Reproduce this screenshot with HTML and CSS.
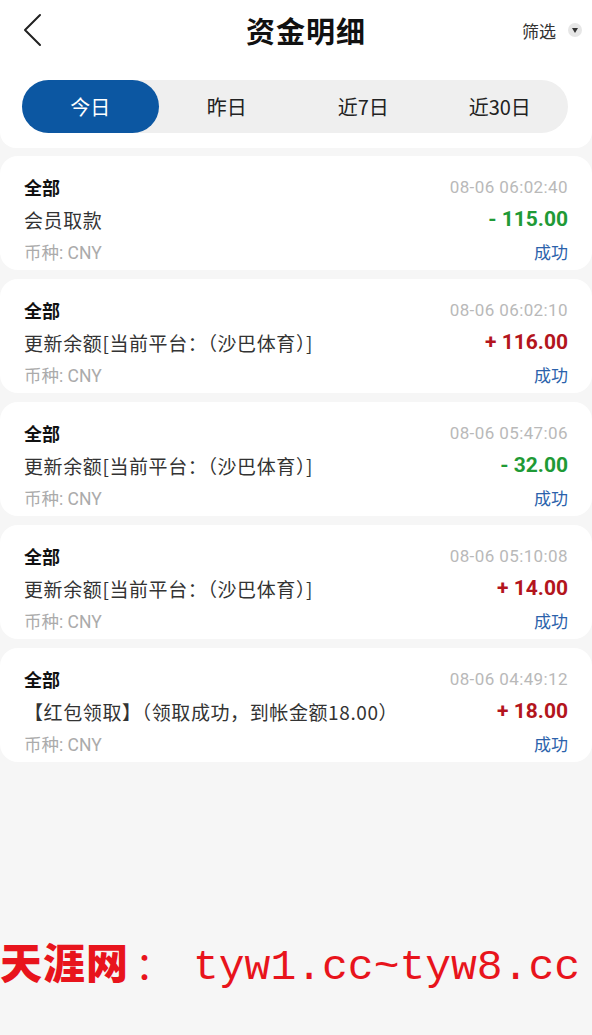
FILE: index.html
```html
<!DOCTYPE html>
<html>
<head>
 <meta charset="utf-8">
 <title>资金明细</title>
 <link rel="stylesheet" href="styles.css">
</head>
<body>
 <div class="entete">
  <div class="barre">
   <svg class="retour" width="24" height="36" viewBox="0 0 24 36">
    <path d="M18 3 L3 18 L18 33" fill="none" stroke="#222" stroke-width="2" stroke-linecap="round" stroke-linejoin="round"/>
   </svg>
   <h1 class="titre">资金明细</h1>
   <div class="filtre">筛选 <span class="rond"><span class="fleche"></span></span></div>
  </div>
  <div class="onglets">
   <div class="onglet actif">今日</div>
   <div class="onglet">昨日</div>
   <div class="onglet">近7日</div>
   <div class="onglet">近30日</div>
  </div>
 </div>

 <div class="liste">
  <div class="carte">
   <div class="ligne"><span class="type">全部</span><span class="date">08-06 06:02:40</span></div>
   <div class="ligne"><span class="desc">会员取款</span><span class="montant moins">- 115.00</span></div>
   <div class="ligne"><span class="devise">币种: CNY</span><span class="etat">成功</span></div>
  </div>
  <div class="carte">
   <div class="ligne"><span class="type">全部</span><span class="date">08-06 06:02:10</span></div>
   <div class="ligne"><span class="desc">更新余额[当前平台：（沙巴体育）]</span><span class="montant plus">+ 116.00</span></div>
   <div class="ligne"><span class="devise">币种: CNY</span><span class="etat">成功</span></div>
  </div>
  <div class="carte">
   <div class="ligne"><span class="type">全部</span><span class="date">08-06 05:47:06</span></div>
   <div class="ligne"><span class="desc">更新余额[当前平台：（沙巴体育）]</span><span class="montant moins">- 32.00</span></div>
   <div class="ligne"><span class="devise">币种: CNY</span><span class="etat">成功</span></div>
  </div>
  <div class="carte">
   <div class="ligne"><span class="type">全部</span><span class="date">08-06 05:10:08</span></div>
   <div class="ligne"><span class="desc">更新余额[当前平台：（沙巴体育）]</span><span class="montant plus">+ 14.00</span></div>
   <div class="ligne"><span class="devise">币种: CNY</span><span class="etat">成功</span></div>
  </div>
  <div class="carte">
   <div class="ligne"><span class="type">全部</span><span class="date">08-06 04:49:12</span></div>
   <div class="ligne"><span class="desc">【红包领取】（领取成功，到帐金额18.00）</span><span class="montant plus">+ 18.00</span></div>
   <div class="ligne"><span class="devise">币种: CNY</span><span class="etat">成功</span></div>
  </div>
 </div>

 <div class="marque"><span class="nom">天涯网</span><span class="deux">：</span><span class="url">tyw1.cc~tyw8.cc</span></div>
</body>
</html>
```

FILE: styles.css
```css
/* Style général */
body {
 margin: 0;
 background-color: #f6f6f6;
 font-family: Roboto, "Noto Sans CJK SC", sans-serif;
 color: #222;
 overflow: hidden;
}
/* En-tête */
.entete {
 background-color: #fff;
 border-radius: 0 0 16px 16px;
 padding-bottom: 15px;
}
.barre {
 height: 60px;
 display: grid;
 grid-template-columns: 1fr auto 1fr;
 align-items: center;
 padding: 0 10px 0 22px;
}
.retour {
 width: 24px;
 height: 36px;
}
.titre {
 margin: 0 0 0 8px;
 font-size: 29px;
 font-weight: bold;
 color: #111;
 letter-spacing: 1px;
 font-family: "Noto Sans CJK SC", sans-serif;
}
.filtre {
 justify-self: end;
 display: flex;
 align-items: center;
 gap: 12px;
 font-size: 17px;
 color: #333;
 font-family: "Noto Sans CJK SC", sans-serif;
}
.rond {
 width: 14px;
 height: 14px;
 border-radius: 50%;
 background-color: #e6e6e6;
 display: flex;
 align-items: center;
 justify-content: center;
}
.fleche {
 width: 0;
 height: 0;
 border-left: 3.5px solid transparent;
 border-right: 3.5px solid transparent;
 border-top: 5px solid #333;
 margin-top: 1px;
}
/* Onglets */
.onglets {
 margin: 20px 24px 0 22px;
 height: 53px;
 border-radius: 27px;
 background-color: #efefef;
 display: grid;
 grid-template-columns: repeat(4, 1fr);
}
.onglet {
 display: flex;
 align-items: center;
 justify-content: center;
 font-size: 20px;
 color: #222;
 font-family: "Noto Sans CJK SC", sans-serif;
}
.onglet.actif {
 background-color: #0c57a2;
 color: #fff;
 border-radius: 27px;
}
/* Liste */
.liste {
 margin-top: 8px;
 display: flex;
 flex-direction: column;
 gap: 9px;
}
.carte {
 background-color: #fff;
 border-radius: 18px;
 padding: 15px 24px 3px 24px;
 height: 96px;
}
.ligne {
 display: flex;
 justify-content: space-between;
 align-items: center;
 height: 32px;
}
.type {
 font-size: 18px;
 font-weight: bold;
 color: #111;
 font-family: "Noto Sans CJK SC", sans-serif;
}
.date {
 font-size: 17px;
 color: #b9b9b9;
 letter-spacing: 0.4px;
}
.desc {
 font-size: 19px;
 color: #333;
 letter-spacing: 0.6px;
 font-family: "Noto Sans CJK SC", sans-serif;
}
.montant {
 font-size: 21px;
 font-weight: bold;
}
.moins {
 color: #1f9a36;
}
.plus {
 color: #b3151d;
}
.devise {
 font-size: 17.5px;
 color: #ababab;
 font-family: Roboto, "Noto Sans CJK SC", sans-serif;
}
.etat {
 font-size: 17px;
 color: #2b62ab;
 font-family: "Noto Sans CJK SC", sans-serif;
}
/* Filigrane */
.marque {
 margin-top: 168px;
 white-space: nowrap;
 color: #e8141c;
 display: flex;
 align-items: baseline;
}
.nom {
 font-family: "Noto Sans CJK SC", sans-serif;
 font-weight: 900;
 font-size: 42px;
 letter-spacing: 1px;
}
.deux {
 font-family: "Noto Sans CJK SC", sans-serif;
 font-size: 38px;
 width: 58px;
 padding-left: 6px;
}
.url {
 font-family: "Liberation Mono", monospace;
 font-size: 43px;
}
```
